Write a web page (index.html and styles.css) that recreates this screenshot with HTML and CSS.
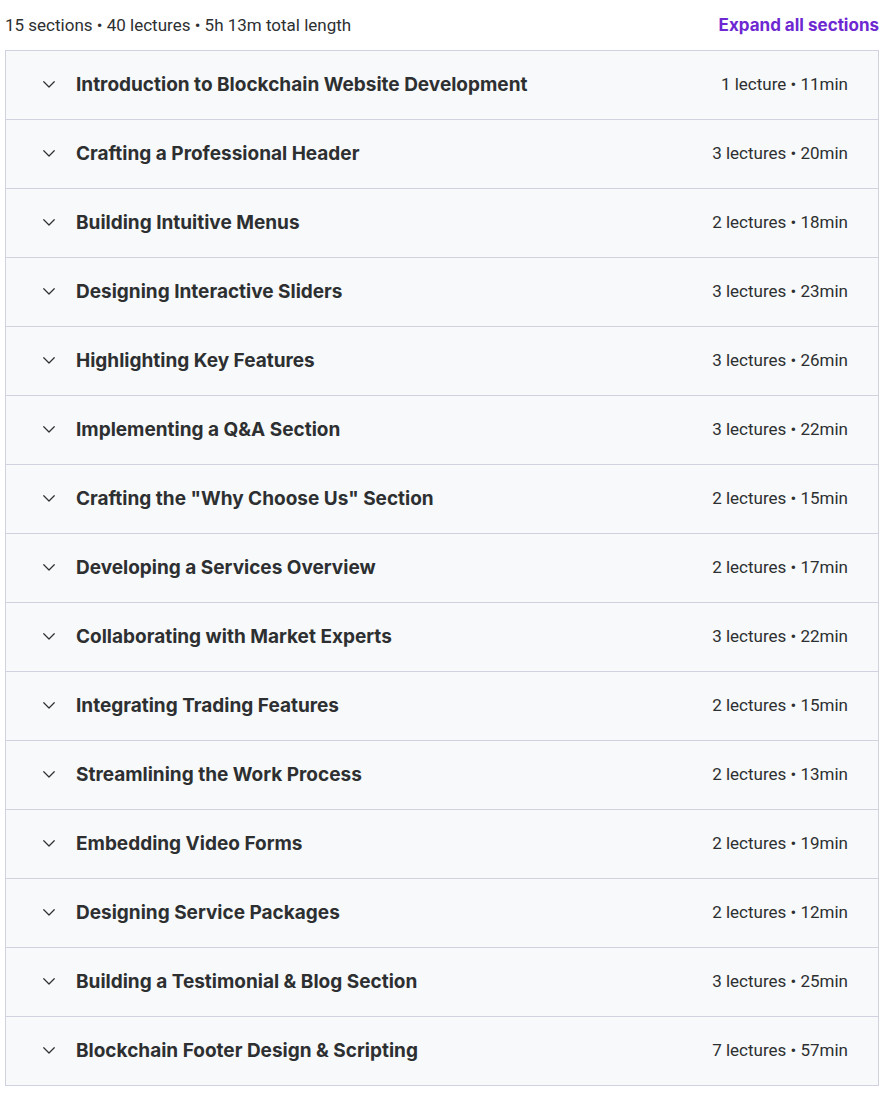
FILE: index.html
```html
<!DOCTYPE html>
<html lang="en">
  <head>
    <meta charset="UTF-8" />
    <meta name="viewport" content="width=device-width, initial-scale=1.0" />
    <title>Course content</title>
    <link rel="stylesheet" href="styles.css">
  </head>

  <body>
    <div class="curriculum">
      <div class="curriculum-header">
        <span class="curriculum-stats">15 sections • 40 lectures • 5h 13m total length</span>
        <button class="expand-all" type="button">Expand all sections</button>
      </div>

      <div class="section-list">
        <div class="section-row">
          <svg class="chevron" viewBox="0 0 24 24"><path d="M5 9l7 7 7-7" /></svg>
          <span class="section-title">Introduction to Blockchain Website Development</span>
          <span class="section-meta">1 lecture • 11min</span>
        </div>
        <div class="section-row">
          <svg class="chevron" viewBox="0 0 24 24"><path d="M5 9l7 7 7-7" /></svg>
          <span class="section-title">Crafting a Professional Header</span>
          <span class="section-meta">3 lectures • 20min</span>
        </div>
        <div class="section-row">
          <svg class="chevron" viewBox="0 0 24 24"><path d="M5 9l7 7 7-7" /></svg>
          <span class="section-title">Building Intuitive Menus</span>
          <span class="section-meta">2 lectures • 18min</span>
        </div>
        <div class="section-row">
          <svg class="chevron" viewBox="0 0 24 24"><path d="M5 9l7 7 7-7" /></svg>
          <span class="section-title">Designing Interactive Sliders</span>
          <span class="section-meta">3 lectures • 23min</span>
        </div>
        <div class="section-row">
          <svg class="chevron" viewBox="0 0 24 24"><path d="M5 9l7 7 7-7" /></svg>
          <span class="section-title">Highlighting Key Features</span>
          <span class="section-meta">3 lectures • 26min</span>
        </div>
        <div class="section-row">
          <svg class="chevron" viewBox="0 0 24 24"><path d="M5 9l7 7 7-7" /></svg>
          <span class="section-title">Implementing a Q&amp;A Section</span>
          <span class="section-meta">3 lectures • 22min</span>
        </div>
        <div class="section-row">
          <svg class="chevron" viewBox="0 0 24 24"><path d="M5 9l7 7 7-7" /></svg>
          <span class="section-title">Crafting the "Why Choose Us" Section</span>
          <span class="section-meta">2 lectures • 15min</span>
        </div>
        <div class="section-row">
          <svg class="chevron" viewBox="0 0 24 24"><path d="M5 9l7 7 7-7" /></svg>
          <span class="section-title">Developing a Services Overview</span>
          <span class="section-meta">2 lectures • 17min</span>
        </div>
        <div class="section-row">
          <svg class="chevron" viewBox="0 0 24 24"><path d="M5 9l7 7 7-7" /></svg>
          <span class="section-title">Collaborating with Market Experts</span>
          <span class="section-meta">3 lectures • 22min</span>
        </div>
        <div class="section-row">
          <svg class="chevron" viewBox="0 0 24 24"><path d="M5 9l7 7 7-7" /></svg>
          <span class="section-title">Integrating Trading Features</span>
          <span class="section-meta">2 lectures • 15min</span>
        </div>
        <div class="section-row">
          <svg class="chevron" viewBox="0 0 24 24"><path d="M5 9l7 7 7-7" /></svg>
          <span class="section-title">Streamlining the Work Process</span>
          <span class="section-meta">2 lectures • 13min</span>
        </div>
        <div class="section-row">
          <svg class="chevron" viewBox="0 0 24 24"><path d="M5 9l7 7 7-7" /></svg>
          <span class="section-title">Embedding Video Forms</span>
          <span class="section-meta">2 lectures • 19min</span>
        </div>
        <div class="section-row">
          <svg class="chevron" viewBox="0 0 24 24"><path d="M5 9l7 7 7-7" /></svg>
          <span class="section-title">Designing Service Packages</span>
          <span class="section-meta">2 lectures • 12min</span>
        </div>
        <div class="section-row">
          <svg class="chevron" viewBox="0 0 24 24"><path d="M5 9l7 7 7-7" /></svg>
          <span class="section-title">Building a Testimonial &amp; Blog Section</span>
          <span class="section-meta">3 lectures • 25min</span>
        </div>
        <div class="section-row">
          <svg class="chevron" viewBox="0 0 24 24"><path d="M5 9l7 7 7-7" /></svg>
          <span class="section-title">Blockchain Footer Design &amp; Scripting</span>
          <span class="section-meta">7 lectures • 57min</span>
        </div>
      </div>
    </div>
  </body>
</html>
```

FILE: styles.css
```css
body {
  font-family: Inter, "Liberation Sans", sans-serif;
  margin: 0;
  padding: 0;
  background-color: #fff;
  color: #2d2f31;
}

.curriculum {
  width: 874px;
  margin-left: 5px;
}

.curriculum-header {
  height: 50px;
  display: flex;
  align-items: center;
  justify-content: space-between;
}
.curriculum-stats {
  font-family: Roboto, "Liberation Sans", sans-serif;
  font-size: 17px;
}
.expand-all {
  font-family: inherit;
  font-size: 17px;
  font-weight: 700;
  color: #6d28d2;
  background: none;
  border: none;
  padding: 0;
  cursor: pointer;
}

.section-list {
  border: 1px solid #d1d2e0;
}
.section-row {
  display: flex;
  align-items: center;
  padding: 0 30px 2px 34px;
  box-sizing: border-box;
  height: 68px;
  background-color: #f7f9fa;
  border-top: 1px solid #d1d2e0;
}
.section-row + .section-row {
  height: 69px;
}
.section-row:first-child {
  border-top: none;
}
.chevron {
  width: 18px;
  height: 18px;
  fill: none;
  stroke: #2d2f31;
  stroke-width: 1.6;
  stroke-linecap: round;
  stroke-linejoin: round;
  margin-right: 18px;
}
.section-title {
  flex: 1;
  font-size: 19px;
  font-weight: 700;
}
.section-meta {
  font-family: Roboto, "Liberation Sans", sans-serif;
  font-size: 17px;
}
```
